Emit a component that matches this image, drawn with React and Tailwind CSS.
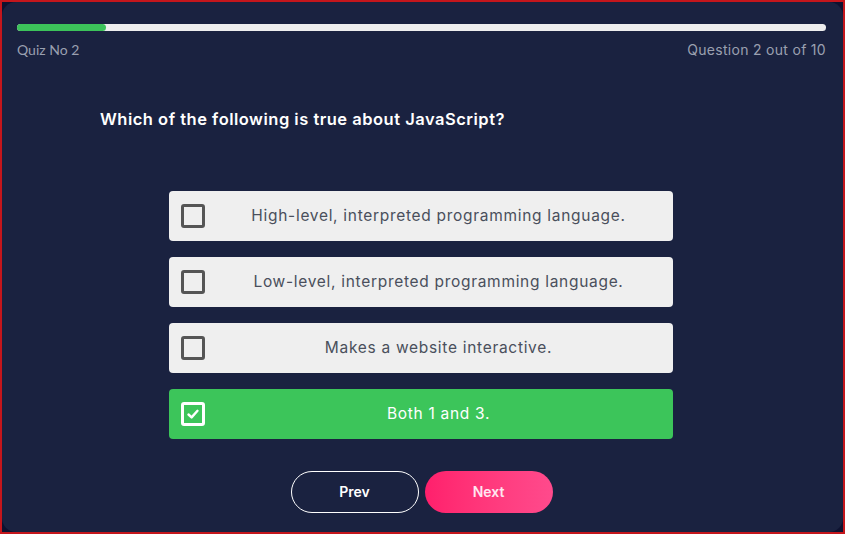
import React, { useState } from "react";

const options = [
  "High-level, interpreted programming language.",
  "Low-level, interpreted programming language.",
  "Makes a website interactive.",
  "Both 1 and 3.",
];

function CheckBox({ checked }) {
  return (
    <div
      className={
        "flex h-6 w-6 shrink-0 items-center justify-center rounded-[3px] border-[3px] " +
        (checked ? "border-white" : "border-[#555555]")
      }
    >
      {checked && (
        <svg width="14" height="14" viewBox="0 0 14 14" fill="none">
          <path d="M2.5 7.5 L5.6 10.4 L11.5 3.8" stroke="white" strokeWidth="2.4" strokeLinecap="round" strokeLinejoin="round" />
        </svg>
      )}
    </div>
  );
}

export default function App() {
  const [selected, setSelected] = useState(3);

  return (
    <div
      className="h-[534px] w-[845px] border-2 border-[#c4161c] bg-[#0e1230]"
      style={{ fontFamily: "Inter, 'Open Sans', sans-serif" }}
    >
      <div className="flex h-full flex-col rounded-[14px] bg-[#1a2240] pl-[15px] pr-[17px] pt-[22px]">
        {/* progress */}
        <div className="h-[7px] w-full rounded-full bg-[#eeeeee]">
          <div className="h-full w-[89px] rounded-full bg-[#3cc35a]" />
        </div>
        <div className="mt-[8px] flex items-center justify-between text-[#9aa0b0]">
          <span style={{ fontFamily: "Lato, sans-serif" }} className="text-[14px]">Quiz No 2</span>
          <span className="text-[14px] tracking-[0.3px]">Question 2 out of 10</span>
        </div>

        <h1 className="mt-[47px] pl-[83px] text-[16.5px] font-semibold tracking-[0.5px] text-white">
          Which of the following is true about JavaScript?
        </h1>

        <div className="mt-[59px] flex flex-col items-center gap-4 pr-[2px]">
          {options.map((opt, i) => {
            const active = selected === i;
            return (
              <button
                key={opt}
                onClick={() => setSelected(i)}
                className={
                  "flex h-[50px] w-[504px] items-center rounded-[4px] px-3 text-[15.5px] tracking-[0.7px] " +
                  (active ? "bg-[#3cc55a] text-white" : "bg-[#efefef] text-[#4a4f5c]")
                }
              >
                <CheckBox checked={active} />
                <span className="flex-1 pl-3 text-center">{opt}</span>
              </button>
            );
          })}
        </div>

        <div className="mt-8 flex justify-center gap-[6px]">
          <button className="h-[42px] w-[128px] rounded-full border border-white text-[14px] font-semibold text-white">
            Prev
          </button>
          <button className="h-[42px] w-[128px] rounded-full bg-gradient-to-r from-[#ff1f6c] to-[#ff4a8c] text-[14px] font-semibold text-[#ffe6f0]">
            Next
          </button>
        </div>
      </div>
    </div>
  );
}
